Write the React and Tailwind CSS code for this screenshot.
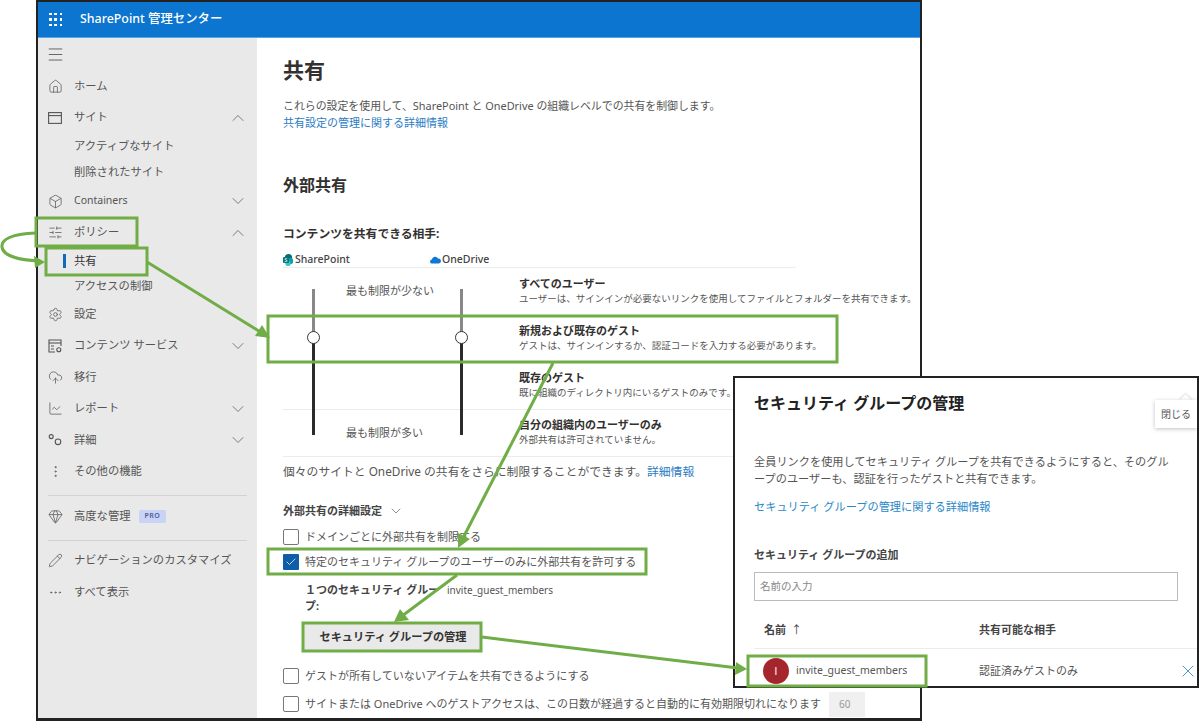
import { Home, Box, SlidersHorizontal, Settings, CloudUpload, ChartLine, EllipsisVertical, Gem, Pencil, Ellipsis, ChevronUp, ChevronDown, Menu, Check, X } from 'lucide-react'

function Waffle() {
  const dots = [0, 1, 2, 3, 4, 5, 6, 7, 8]
  return (
    <div className="grid grid-cols-3 gap-[3px] w-[13px]">
      {dots.map((d) => (
        <span key={d} className="w-[2.5px] h-[2.5px] bg-white" />
      ))}
    </div>
  )
}

function SiteIcon() {
  return (
    <svg width="14" height="12" viewBox="0 0 14 12" fill="none" stroke="#555" strokeWidth="1.1">
      <rect x="0.6" y="0.6" width="12.8" height="10.8" />
      <path d="M0.6 3.6h12.8" />
    </svg>
  )
}

function ContentIcon() {
  return (
    <svg width="14" height="14" viewBox="0 0 14 14" fill="none" stroke="#555" strokeWidth="1.1">
      <path d="M7 13H1V1h12v6" />
      <path d="M1 4h12" />
      <path d="M3 7h3M3 10h3" />
      <circle cx="10.8" cy="10.8" r="2" />
    </svg>
  )
}

function CirclesIcon() {
  return (
    <svg width="14" height="14" viewBox="0 0 14 14" fill="none" stroke="#555" strokeWidth="1.1">
      <circle cx="3.2" cy="3.6" r="2" />
      <circle cx="10" cy="8.8" r="2.8" />
    </svg>
  )
}

function SharePointLogo() {
  return (
    <svg width="11" height="12" viewBox="0 0 11 12">
      <circle cx="5.5" cy="3.6" r="3.6" fill="#036c70" />
      <circle cx="7" cy="7" r="3.2" fill="#1a9ba1" />
      <circle cx="5" cy="9.4" r="2.6" fill="#37c6d0" />
      <rect x="0" y="3" width="6" height="6" rx="1" fill="#03787c" />
      <text x="3" y="7.8" fontSize="5" fill="#fff" textAnchor="middle">S</text>
    </svg>
  )
}

function OneDriveLogo() {
  return (
    <svg width="11" height="8" viewBox="0 0 11 8">
      <path d="M2.2 7.6a2 2 0 0 1-.3-4A3.2 3.2 0 0 1 8 2.6a2.5 2.5 0 0 1 .8 5z" fill="#0f78d4" />
    </svg>
  )
}

const icon = { size: 15, strokeWidth: 1.2, color: '#555' }

function NavItem({ ic, label, chevron, children }) {
  return (
    <div className="h-[31.5px] flex items-center pl-[10px] pr-[9px]">
      <span className="w-[26px] flex justify-start">{ic}</span>
      <span className="flex-1 flex items-center gap-2 text-[11.3px] text-[#555]">
        {label}
        {children}
      </span>
      {chevron === 'up' && <ChevronUp size={20} strokeWidth={0.9} color="#555" />}
      {chevron === 'down' && <ChevronDown size={20} strokeWidth={0.9} color="#555" />}
    </div>
  )
}

function Sidebar() {
  return (
    <aside className="w-[219px] shrink-0 bg-[#e9e9e9] flex flex-col">
      <div className="h-[32.5px] flex items-center pl-[8px]">
        <Menu size={19} strokeWidth={1} color="#444" />
      </div>
      <NavItem ic={<Home {...icon} />} label="ホーム" />
      <NavItem ic={<SiteIcon />} label="サイト" chevron="up" />
      <div className="h-[26px] flex items-center pl-[36px] text-[11.3px] text-[#555]">アクティブなサイト</div>
      <div className="h-[26px] flex items-center pl-[36px] text-[11.3px] text-[#555]">削除されたサイト</div>
      <NavItem ic={<Box {...icon} />} label={<span className="text-[10.5px]">Containers</span>} chevron="down" />
      <NavItem ic={<SlidersHorizontal {...icon} />} label="ポリシー" chevron="up" />
      <div className="h-[25px] flex items-center pl-[25px] text-[11.3px] text-[#333]">
        <span className="w-[3px] h-[14px] bg-[#0f6cbd] mr-[8px]" />
        共有
      </div>
      <div className="h-[25px] flex items-center pl-[36px] text-[11.3px] text-[#555]">アクセスの制御</div>
      <NavItem ic={<Settings {...icon} />} label="設定" />
      <NavItem ic={<ContentIcon />} label="コンテンツ サービス" chevron="down" />
      <NavItem ic={<CloudUpload {...icon} />} label="移行" />
      <NavItem ic={<ChartLine {...icon} />} label="レポート" chevron="down" />
      <NavItem ic={<CirclesIcon />} label="詳細" chevron="down" />
      <NavItem ic={<EllipsisVertical {...icon} />} label="その他の機能" />
      <div className="mx-[10px] mt-[7px] mb-[5px] border-t border-[#d2d2d2]" />
      <NavItem ic={<Gem {...icon} />} label="高度な管理">
        <span className="h-[13px] px-[6px] rounded-[2px] bg-[#c9d3f5] text-[7px] font-semibold tracking-[0.5px] text-[#50599a] flex items-center">PRO</span>
      </NavItem>
      <div className="mx-[10px] mt-[8px] mb-[4px] border-t border-[#d2d2d2]" />
      <NavItem ic={<Pencil {...icon} />} label="ナビゲーションのカスタマイズ" />
      <NavItem ic={<Ellipsis {...icon} />} label="すべて表示" />
    </aside>
  )
}

const options = [
  { t: 'すべてのユーザー', d: 'ユーザーは、サインインが必要ないリンクを使用してファイルとフォルダーを共有できます。', line: false },
  { t: '新規および既存のゲスト', d: 'ゲストは、サインインするか、認証コードを入力する必要があります。', line: false },
  { t: '既存のゲスト', d: '既に組織のディレクトリ内にいるゲストのみです。', line: false },
  { t: '自分の組織内のユーザーのみ', d: '外部共有は許可されていません。', line: true },
]

function Slider() {
  return (
    <div className="w-[3px] h-[146px] flex flex-col items-center relative">
      <div className="w-[3px] h-[48px] bg-[#8a8886]" />
      <div className="w-[3px] flex-1 bg-[#2b2b2b]" />
      <span className="absolute top-[42px] -left-[5px] w-[13px] h-[13px] rounded-full bg-white border-[1.5px] border-[#333]" />
    </div>
  )
}

function CheckRow({ label, checked }) {
  return (
    <div className="flex items-center gap-[6px] text-[11px] text-[#555]">
      {checked ? (
        <span className="w-[16px] h-[16px] bg-[#0f5ca8] rounded-[1px] flex items-center justify-center">
          <Check size={12} strokeWidth={1.5} color="#fff" />
        </span>
      ) : (
        <span className="w-[16px] h-[16px] bg-white border border-[#777] rounded-[2px]" />
      )}
      <span>{label}</span>
    </div>
  )
}

function Main() {
  return (
    <main className="flex-1 bg-white pl-[26px] overflow-hidden">
      <h1 className="mt-[18px] h-[29px] text-[21px] leading-[29px] font-bold text-[#323130]">共有</h1>
      <p className="mt-[12px] text-[10.9px] leading-[17px] text-[#555]">これらの設定を使用して、SharePoint と OneDrive の組織レベルでの共有を制御します。</p>
      <a className="block text-[11px] leading-[18px] text-[#2b7cc4]">共有設定の管理に関する詳細情報</a>
      <h2 className="mt-[42px] text-[16px] leading-[22px] font-bold text-[#323130]">外部共有</h2>
      <h3 className="mt-[28px] text-[11.8px] leading-[18px] font-bold text-[#323130]">コンテンツを共有できる相手:</h3>
      <div className="mt-[10px] w-[513px] h-[15px] flex items-center text-[10.5px] font-medium text-[#444]">
        <span className="w-[147px] flex items-center gap-[1px]"><SharePointLogo />SharePoint</span>
        <span className="flex items-center gap-[1px]"><OneDriveLogo />OneDrive</span>
      </div>
      <div className="relative w-[640px]">
        <div className="w-[513px] border-t border-[#ececec]">
          {options.map((o) => (
            <div key={o.t} className={o.line ? 'h-[47px] border-t border-[#ececec]' : 'h-[47px]'}>
              <div className={o.line ? 'pl-[236px] pt-[7px] w-[640px]' : 'pl-[236px] pt-[8px] w-[640px]'}>
                <div className="text-[11px] leading-[15px] font-bold text-[#323130]">{o.t}</div>
                <div className="text-[9.5px] leading-[15px] text-[#555] whitespace-nowrap">{o.d}</div>
              </div>
            </div>
          ))}
        </div>
        <div className="absolute left-[29px] top-[22px]"><Slider /></div>
        <div className="absolute left-[177px] top-[22px]"><Slider /></div>
        <span className="absolute left-[63px] top-[16px] text-[11px] text-[#555]">最も制限が少ない</span>
        <span className="absolute left-[63px] top-[158px] text-[11px] text-[#555]">最も制限が多い</span>
      </div>
      <div className="w-[513px] border-t border-[#ececec]" />
      <p className="mt-[5px] text-[11.8px] leading-[18px] text-[#555]">個々のサイトと OneDrive の共有をさらに制限することができます。<a className="text-[#2b7cc4]">詳細情報</a></p>
      <div className="mt-[23px] flex items-center gap-[6px] text-[11px] leading-[16px] font-bold text-[#444]">
        外部共有の詳細設定
        <ChevronDown size={16} strokeWidth={1} color="#555" />
      </div>
      <div className="mt-[10px]"><CheckRow label="ドメインごとに外部共有を制限する" /></div>
      <div className="mt-[8px]"><CheckRow checked label="特定のセキュリティ グループのユーザーのみに外部共有を許可する" /></div>
      <div className="mt-[12px] ml-[22px] flex text-[11px] leading-[16px]">
        <div className="w-[142px] font-bold text-[#444]">１つのセキュリティ グループ:</div>
        <div className="text-[#555] text-[10px]">invite_guest_members</div>
      </div>
      <button className="mt-[10px] ml-[21px] block w-[178px] h-[26px] bg-[#e9e9e9] text-[11.2px] font-bold text-[#333]">セキュリティ グループの管理</button>
      <div className="mt-[18px]"><CheckRow label="ゲストが所有していないアイテムを共有できるようにする" /></div>
      <div className="mt-[7px] flex items-center gap-[8px]">
        <CheckRow label="サイトまたは OneDrive へのゲストアクセスは、この日数が経過すると自動的に有効期限切れになります" />
        <span className="w-[36px] h-[25px] bg-[#f0f0f0] text-[10px] text-[#999] flex items-center pl-[10px]">60</span>
      </div>
    </main>
  )
}

function Dialog() {
  return (
    <div className="absolute left-[733px] top-[376px] w-[466px] h-[312px] bg-white border-2 border-[#222] pl-[19px] overflow-hidden">
      <div className="mt-[13px] text-[16px] leading-[24px] font-bold text-[#222]">セキュリティ グループの管理</div>
      <p className="mt-[38px] text-[11.2px] leading-[17px] text-[#555] whitespace-nowrap">全員リンクを使用してセキュリティ グループを共有できるようにすると、そのグル<br />ープのユーザーも、認証を行ったゲストと共有できます。</p>
      <a className="block mt-[11px] text-[11.2px] leading-[17px] text-[#2b87c8]">セキュリティ グループの管理に関する詳細情報</a>
      <div className="mt-[32px] text-[11px] leading-[16px] font-bold text-[#444]">セキュリティ グループの追加</div>
      <div className="mt-[9px] w-[424px] h-[29px] border border-[#bbb] flex items-center pl-[5px] text-[10.5px] text-[#888]">名前の入力</div>
      <div className="mt-[15px] h-[33px] pb-[3px] flex items-center text-[11px] font-bold text-[#444] border-b border-[#ececec]">
        <span className="w-[225px] pl-[10px]">名前 <span className="font-normal pl-[2px]">↑</span></span>
        <span>共有可能な相手</span>
      </div>
      <div className="h-[44px] flex items-center text-[10.5px] text-[#555]">
        <span className="ml-[9px] w-[26px] h-[26px] rounded-full bg-[#a4262c] text-white text-[10px] font-['Liberation_Sans',sans-serif] flex items-center justify-center">I</span>
        <span className="w-[190px] pl-[7px]">invite_guest_members</span>
        <span className="flex-1 text-[11px]">認証済みゲストのみ</span>
        <X size={20} strokeWidth={1} color="#2b87c8" className="-mr-[1px]" />
      </div>
      <span className="absolute right-[7px] top-[18px] w-[9px] h-[9px] bg-white rotate-45 shadow-[-1px_-1px_2px_rgba(0,0,0,0.12)]" />
      <div className="absolute right-0 top-[22px] w-[42px] h-[28px] bg-white shadow-[0_1px_4px_rgba(0,0,0,0.25)] text-[10px] text-[#555] flex items-center justify-center">閉じる</div>
    </div>
  )
}

// 注釈の緑の枠と矢印
function Annotations() {
  const g = '#70ad47'
  const box = { fill: 'none', stroke: g, strokeWidth: 3 }
  const line = { fill: 'none', stroke: g, strokeWidth: 3 }
  return (
    <svg className="absolute left-0 top-0 pointer-events-none" width="1200" height="721">
      <rect x="36" y="218" width="101" height="28" {...box} />
      <rect x="46" y="248" width="101" height="27" {...box} />
      <rect x="268" y="316" width="569" height="46" {...box} />
      <rect x="268" y="549" width="378" height="25" {...box} />
      <rect x="303" y="623" width="178" height="28" {...box} />
      <rect x="748" y="656" width="178" height="30" {...box} />
      <path d="M36 233C10 234 1 240 2 247C3 256 20 260 38 261" {...line} />
      <path d="M45 262L34 256L35 268Z" fill={g} />
      <path d="M147 262L262 333" {...line} />
      <path d="M270 338L255 336L262 325Z" fill={g} />
      <path d="M553 363L462 540" {...line} />
      <path d="M458 548L458 533L470 539Z" fill={g} />
      <path d="M457 575L402 616" {...line} />
      <path d="M394 622L400 609L409 620Z" fill={g} />
      <path d="M482 637L738 668" {...line} />
      <path d="M747 669L735 675L736 662Z" fill={g} />
    </svg>
  )
}

export default function App() {
  return (
    <div className="relative w-[1200px] h-[721px] bg-white overflow-hidden font-['Noto_Sans','Noto_Sans_CJK_JP',sans-serif]">
      <div className="absolute left-[36px] top-0 w-[886px] h-[721px] border-2 border-[#222] border-b-[3px] flex flex-col overflow-hidden">
        <header className="h-[36px] shrink-0 bg-[#0b75cf] border-b border-[#5aa5e5] flex items-center pl-[11px] gap-[18px]">
          <Waffle />
          <span className="text-[12.4px] font-medium text-white">SharePoint 管理センター</span>
        </header>
        <div className="flex-1 flex min-h-0">
          <Sidebar />
          <Main />
        </div>
      </div>
      <Dialog />
      <Annotations />
    </div>
  )
}
